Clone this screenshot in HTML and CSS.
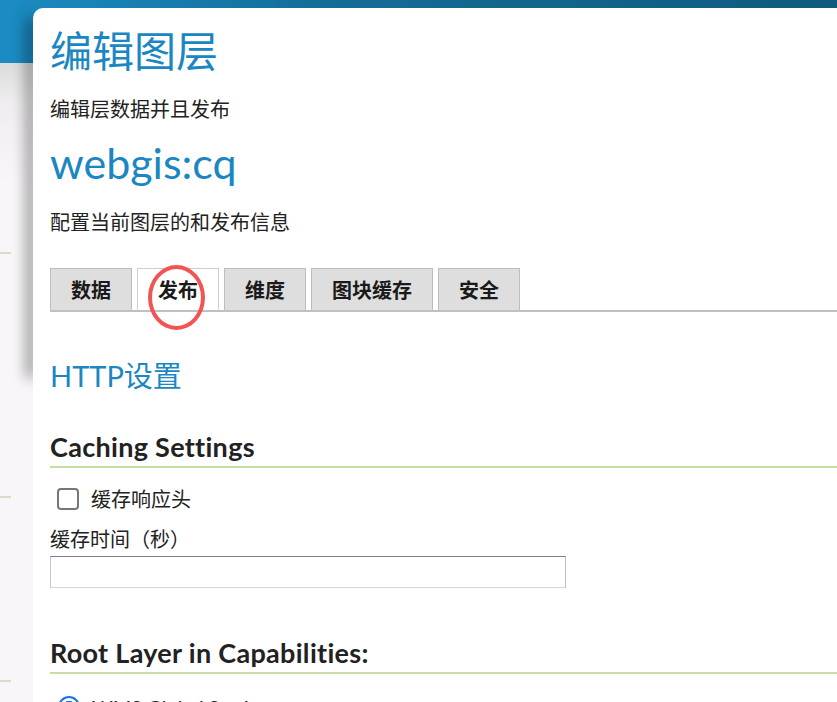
FILE: index.html
```html
<!DOCTYPE html>
<html>
<head>
    <title>编辑图层</title>
    <link rel="stylesheet" href="styles.css">
</head>
<body>
    <div class="page">
        <aside class="sidebar">
            <div class="side-sep first"></div>
            <div class="side-sep second"></div>
            <div class="side-sep third"></div>
        </aside>

        <main class="card">
            <h1 class="page-title">编辑图层</h1>
            <p class="page-desc">编辑层数据并且发布</p>

            <h2 class="layer-name">webgis:cq</h2>
            <p class="layer-desc">配置当前图层的和发布信息</p>

            <div class="tabs">
                <div class="tab">数据</div>
                <div class="tab active">发布</div>
                <div class="tab">维度</div>
                <div class="tab">图块缓存</div>
                <div class="tab">安全</div>
                <div class="mark"></div>
            </div>

            <h3 class="section-title">HTTP设置</h3>

            <h4 class="group-title">Caching Settings</h4>
            <label class="check-row">
                <input type="checkbox" class="check">
                <span>缓存响应头</span>
            </label>
            <div class="field-label">缓存时间（秒）</div>
            <input type="text" class="text-input">

            <h4 class="group-title root">Root Layer in Capabilities:</h4>
            <label class="radio-row">
                <input type="radio" name="root" class="radio" checked>
                <span>WMS Global Settings</span>
            </label>
        </main>
    </div>
</body>
</html>
```

FILE: styles.css
```css
body {
    margin: 0;
    font-family: Lato, "Noto Sans CJK SC", sans-serif;
    color: #222;
    background:
        linear-gradient(to right, #1b8cc3, #136c96 40%, #0f5a7d) top left / 100% 63px no-repeat,
        linear-gradient(#dcdcdc, #efedef 40px, #f8f6f8 120px) 0 63px / 100% 100% no-repeat,
        #f8f6f8;
    overflow: hidden;
    height: 702px;
}

.page { display: flex; padding-top: 8px; }

.sidebar { width: 33px; flex: none; }
.side-sep { width: 11px; height: 2px; background: #d5dfc6; }
.side-sep.first { margin-top: 244px; }
.side-sep.second { margin-top: 242px; }
.side-sep.third { margin-top: 182px; }

.card {
    flex: 1;
    position: relative;
    background: #fff;
    border-top-left-radius: 10px;
    padding: 18px 0 0 17px;
    height: 720px;
}
.card::before {
    content: "";
    position: absolute;
    left: 0;
    top: 10px;
    width: 8px;
    height: 360px;
    box-shadow: -6px 0 14px rgba(0, 0, 0, 0.5);
    z-index: -1;
}

.page-title { margin: 0; font-size: 42px; line-height: 50px; font-weight: normal; color: #1b87c2; }
.page-desc { margin: 21px 0 0; font-size: 20px; line-height: 24px; }
.layer-name { margin: 17px 0 0; font-size: 43px; line-height: 50px; font-weight: normal; color: #1b87c2; }
.layer-desc { margin: 22px 0 0; font-size: 20px; line-height: 24px; }

.tabs {
    position: relative;
    display: flex;
    gap: 5px;
    margin-top: 34px;
    border-bottom: 2px solid #c0c0c0;
}
.tab {
    height: 41px;
    padding: 0 20px;
    display: flex;
    align-items: center;
    font-size: 20px;
    line-height: 24px;
    font-weight: bold;
    color: #1a1a1a;
    background: #dfdede;
    border: 1px solid #bdbdbd;
    border-bottom: none;
}
.tab.active { background: #fff; border-color: #cfcfcf; }
.mark {
    position: absolute;
    left: 98px;
    top: -3px;
    width: 57px;
    height: 65px;
    border: 4px solid #f25454;
    border-radius: 50%;
    box-sizing: border-box;
}

.section-title { margin: 46px 0 0; font-size: 29px; line-height: 36px; font-weight: normal; color: #1b87c2; }

.group-title {
    margin: 37px 0 0;
    font-size: 27px;
    line-height: 31px;
    letter-spacing: 0.3px;
    font-weight: bold;
    padding-bottom: 4px;
    border-bottom: 2px solid #c8dca3;
}
.group-title.root { margin-top: 49px; }

.check-row, .radio-row { display: flex; align-items: center; gap: 12px; font-size: 20px; line-height: 24px; }
.check-row { margin-top: 19px; }
.check {
    appearance: none;
    margin: 0 0 0 7px;
    width: 22px;
    height: 22px;
    border: 2px solid #777;
    border-radius: 4px;
    background: #fff;
}
.field-label { margin-top: 16px; font-size: 20px; line-height: 24px; }
.text-input {
    display: block;
    margin-top: 5px;
    width: 516px;
    height: 32px;
    box-sizing: border-box;
    border: 1px solid;
    border-color: #7d7d7d #bdbdbd #d5d5d5 #c6c6c6;
    background: #fff;
}

.radio-row { margin-top: 21px; }
.radio {
    appearance: none;
    margin: 0 0 0 8px;
    width: 22px;
    height: 22px;
    border: 2px solid #1a73e8;
    border-radius: 50%;
    background: radial-gradient(circle, #1a73e8 0 6px, #fff 6.5px);
}
```
